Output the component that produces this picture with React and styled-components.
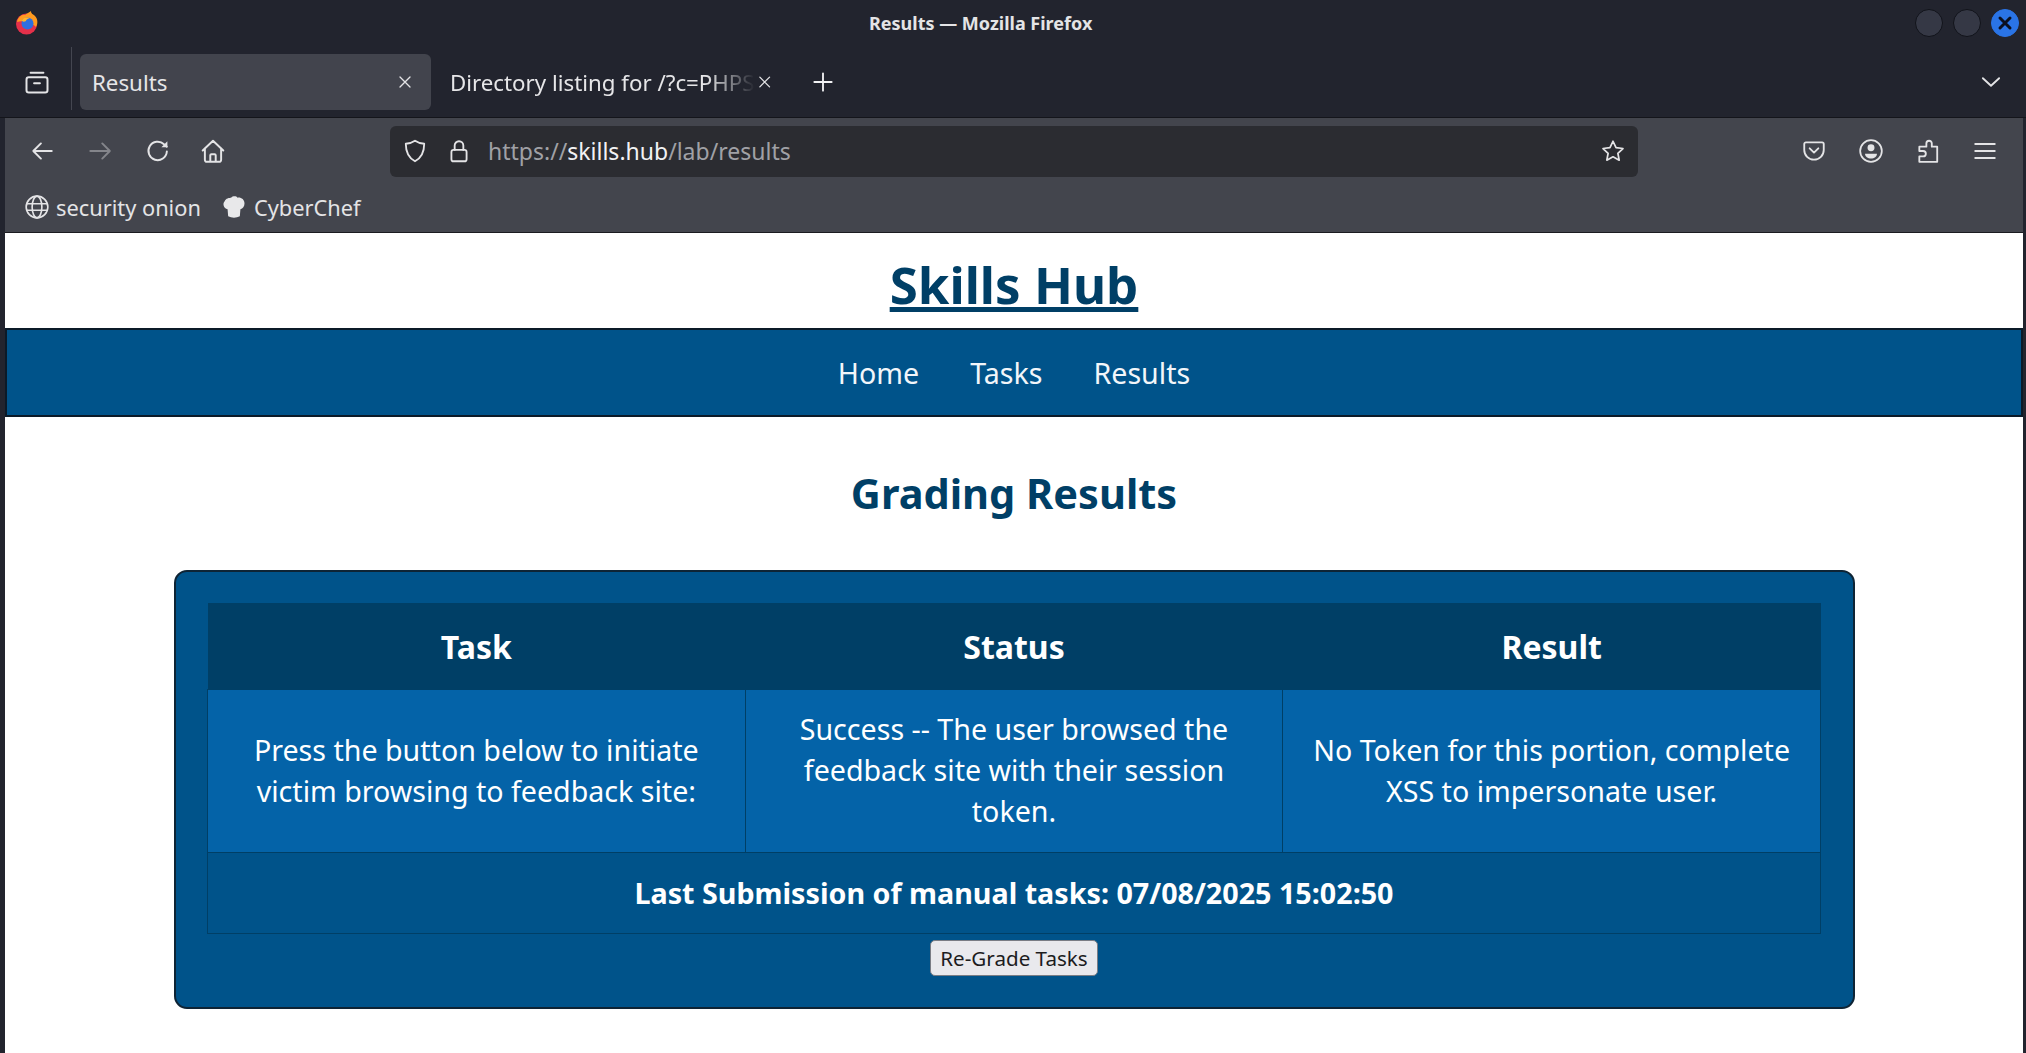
import styled, { createGlobalStyle } from 'styled-components';

const Global = createGlobalStyle`
  html, body {
    margin: 0;
    height: 100%;
    background: #22242e;
    overflow: hidden;
  }
  * { box-sizing: border-box; }
`;

const Chrome = styled.div`
  height: 1053px;
  display: flex;
  flex-direction: column;
  background: #22242e;
  font-family: 'Noto Sans', sans-serif;
  color: #e6e6e8;
`;

const TitleBar = styled.div`
  height: 46px;
  flex: none;
  display: grid;
  grid-template-columns: 854px auto 1fr;
  align-items: center;
  padding: 0 7px 0 15px;
`;

const WindowTitle = styled.div`
  font-size: 18px;
  font-weight: 700;
  color: #e4e4e6;
`;

const WindowButtons = styled.div`
  display: flex;
  gap: 10px;
  justify-content: flex-end;
`;

const WindowButton = styled.div`
  width: 28px;
  height: 28px;
  border-radius: 50%;
  display: flex;
  align-items: center;
  justify-content: center;
  border: 1px solid ${(p) => (p.$active ? '#2a74e6' : '#11131a')};
  background: ${(p) => (p.$active ? '#2a74e6' : '#353845')};
`;

const TabBar = styled.div`
  height: 72px;
  flex: none;
  display: flex;
  align-items: flex-start;
  padding: 8px 22px 0 5px;
  border-bottom: 1px solid #14151b;
`;

const TabsButton = styled.div`
  width: 67px;
  height: 63px;
  margin-top: -7px;
  padding: 6px 3px 0 0;
  border-right: 1px solid #444650;
  display: flex;
  align-items: center;
  justify-content: center;
`;

const Tab = styled.div`
  height: 56px;
  width: ${(p) => p.$width}px;
  margin-left: ${(p) => p.$offset}px;
  flex: none;
  display: flex;
  align-items: center;
  justify-content: space-between;
  padding: 0 ${(p) => p.$padRight}px 0 ${(p) => p.$padLeft}px;
  border-radius: 6px;
  background: ${(p) => (p.$active ? '#42444d' : 'transparent')};
  font-size: 22.3px;
`;

const TabLabel = styled.span`
  white-space: nowrap;
  mask-image: ${(p) =>
    p.$fade ? 'linear-gradient(to right, #000 84%, transparent 100%)' : 'none'};
`;

const NewTab = styled.div`
  margin-left: 31px;
  height: 56px;
  display: flex;
  align-items: center;
`;

const TabEnd = styled.div`
  margin-left: auto;
  height: 56px;
  display: flex;
  align-items: center;
`;

const Frame = styled.div`
  flex: 1;
  display: flex;
  flex-direction: column;
  margin: 0 3px 0 5px;
  min-height: 0;
`;

const NavBar = styled.div`
  height: 66px;
  flex: none;
  background: #43454d;
  display: flex;
  align-items: center;
  padding: 0 25px 0 24px;
`;

const NavIcons = styled.div`
  display: flex;
  align-items: center;
  gap: ${(p) => p.$gap}px;
`;

const UrlBar = styled.div`
  width: 1248px;
  height: 51px;
  margin: 0 auto 0 164px;
  border-radius: 6px;
  background: #2b2c31;
  display: flex;
  align-items: center;
  padding: 0 12px 0 12px;
`;

const LockSlot = styled.div`
  margin-left: 18px;
  display: flex;
`;

const UrlText = styled.div`
  margin-left: 16px;
  flex: 1;
  font-size: 23px;
  color: #a0a1a6;
  white-space: nowrap;

  b {
    font-weight: 400;
    color: #f2f2f4;
  }
`;

const Bookmarks = styled.div`
  height: 49px;
  flex: none;
  background: #43454d;
  display: flex;
  align-items: center;
  gap: 19px;
  padding: 0 0 2px 19px;
  border-bottom: 1px solid #1a1b20;
`;

const Bookmark = styled.div`
  display: flex;
  align-items: center;
  gap: 6px;
  font-size: 21.8px;
  color: #e4e4e6;
`;

const Page = styled.main`
  flex: 1;
  min-height: 0;
  background: #fff;
  overflow: hidden;
`;

const SiteTitle = styled.h1`
  height: 95px;
  margin: 0;
  padding-top: 6px;
  display: flex;
  align-items: center;
  justify-content: center;
  font-size: 51px;
  font-weight: 700;
  color: #003f66;
  text-decoration: underline;
`;

const SiteNav = styled.nav`
  height: 89px;
  background: #00538a;
  border: 2px solid #0b1a28;
  display: flex;
  align-items: center;
  justify-content: center;
  gap: 51px;
  font-size: 28.6px;
  color: #f2f6fa;
`;

const Heading = styled.h2`
  margin: 0;
  height: 153px;
  padding-bottom: 2px;
  display: flex;
  align-items: center;
  justify-content: center;
  font-size: 41.5px;
  font-weight: 700;
  color: #003f66;
`;

const Card = styled.section`
  width: 1681px;
  margin-left: 169px;
  padding: 31px 32px 30px 31px;
  background: #00538a;
  border: 2px solid #0e2435;
  border-radius: 13px;
  display: flex;
  flex-direction: column;
  align-items: center;
`;

const Table = styled.table`
  width: 100%;
  table-layout: fixed;
  border-collapse: collapse;
  color: #fff;
`;

const HeadCell = styled.th`
  height: 86px;
  padding: 2px 0 0;
  background: #003f66;
  font-size: 32px;
  font-weight: 700;
`;

const Cell = styled.td`
  height: 163px;
  padding: 0 20px 2px;
  background: #0463a8;
  border: 1px solid #003f66;
  font-size: 28.6px;
  line-height: 41px;
  text-align: center;
`;

const FooterCell = styled.td`
  height: 81px;
  border: 1px solid #003f66;
  font-size: 28.7px;
  font-weight: 700;
  text-align: center;
`;

const Regrade = styled.button`
  width: 168px;
  height: 36px;
  margin-top: 6px;
  margin-bottom: 1px;
  padding: 0;
  border: 1px solid #7a7d85;
  border-radius: 5px;
  background: #e9e9ed;
  font-family: 'Noto Sans', sans-serif;
  font-size: 20.6px;
  color: #1c1c1e;
`;

const Line = ({ size = 26, children, color = '#e4e4e6', width = 2 }) => (
  <svg
    width={size}
    height={size}
    viewBox="0 0 24 24"
    fill="none"
    stroke={color}
    strokeWidth={width}
    strokeLinecap="round"
    strokeLinejoin="round"
  >
    {children}
  </svg>
);

const FirefoxLogo = () => (
  <svg width="24" height="24" viewBox="0 0 24 24">
    <circle cx="11.5" cy="13" r="10.5" fill="#e5304a" />
    <path d="M2 11 C3 6 7 3 10 4 C12 2 15 1 16 0 C16 3 18 3 20 5 C23 8 23 13 21 16 C17 12 8 9 2 11Z" fill="#ff9a1f" />
    <circle cx="12.5" cy="12.5" r="6" fill="#2e6fe0" />
    <path d="M7 9 C9 6 13 6 15 7 C12 8 11 9 11 10 C9 11 7 11 7 9Z" fill="#ffb52e" />
  </svg>
);

const ChefHat = () => (
  <svg width="28" height="28" viewBox="0 0 24 24">
    <path
      d="M7 20 L6.500 14 C3 13 2 9 4 7 C5 4.500 8 4 9.500 4 C11 2.500 14 2.500 15 4 C18 3.500 21 5.500 21 9 C21 11.500 19.500 13.500 17.500 14 L17 20 C14 21.500 10 21.500 7 20Z"
      fill="#e8e8ea"
    />
  </svg>
);

function App() {
  return (
    <Chrome>
      <Global />
      <TitleBar>
        <FirefoxLogo />
        <WindowTitle>Results — Mozilla Firefox</WindowTitle>
        <WindowButtons>
          <WindowButton />
          <WindowButton />
          <WindowButton $active>
            <Line size={20} color="#0b1020" width={3.6}>
              <path d="M6 6l12 12M18 6L6 18" />
            </Line>
          </WindowButton>
        </WindowButtons>
      </TitleBar>

      <TabBar>
        <TabsButton>
          <Line size={28} width={1.7}>
            <path d="M6.500 4h11M5 8h14a2 2 0 0 1 2 2v9a2 2 0 0 1-2 2H5a2 2 0 0 1-2-2v-9a2 2 0 0 1 2-2zM9.500 13h5" />
          </Line>
        </TabsButton>
        <Tab $active $width={351} $offset={8} $padLeft={12} $padRight={16}>
          <TabLabel>Results</TabLabel>
          <Line size={20} width={1.6}>
            <path d="M6 6l12 12M18 6L6 18" />
          </Line>
        </Tab>
        <Tab $width={340} $offset={8} $padLeft={11} $padRight={5}>
          <TabLabel $fade>Directory listing for /?c=PHPS</TabLabel>
          <Line size={20} width={1.6}>
            <path d="M6 6l12 12M18 6L6 18" />
          </Line>
        </Tab>
        <NewTab>
          <Line size={26} color="#f2f2f4" width={1.7}>
            <path d="M12 4v16M4 12h16" />
          </Line>
        </NewTab>
        <TabEnd>
          <Line size={26} width={1.7}>
            <path d="M4.500 8.500L12 15.500l7.500-7" />
          </Line>
        </TabEnd>
      </TabBar>

      <Frame>
        <NavBar>
          <NavIcons $gap={31}>
            <Line width={1.8}>
              <path d="M21 12H4M11 5l-7 7 7 7" />
            </Line>
            <Line color="#84858b" width={1.8}>
              <path d="M4 12h18M15 5l7 7-7 7" />
            </Line>
            <Line width={1.8}>
              <path d="M22 12.500a8.500 8.500 0 1 1-2.600-6.700L22 8" />
              <path d="M22.500 3v5.500h-5.500z" fill="#e4e4e6" stroke="none" />
            </Line>
            <Line width={1.8}>
              <path d="M2.500 11.500L12 2.500l9.500 9M4.500 9.500V20a2 2 0 0 0 2 2h11a2 2 0 0 0 2-2V9.500M9.500 22v-6a1 1 0 0 1 1-1h3a1 1 0 0 1 1 1v6" />
            </Line>
          </NavIcons>
          <UrlBar>
            <Line width={1.7}>
              <path d="M12 2.500c2.500 1.700 5.500 2.600 8.500 2.800 0 7.500-2.500 13-8.500 16.200C6 18.300 3.500 12.800 3.500 5.300c3-.2 6-1.100 8.500-2.800z" />
            </Line>
            <LockSlot>
              <Line width={1.7}>
                <rect x="5" y="11" width="14" height="10.500" rx="2" />
                <path d="M8 11V7a4 4 0 0 1 8 0v4" />
              </Line>
            </LockSlot>
            <UrlText>
              https://<b>skills.hub</b>/lab/results
            </UrlText>
            <Line width={1.6}>
              <path d="M12 3l2.800 5.900 6.400.8-4.700 4.400 1.200 6.400L12 17.400l-5.700 3.100 1.200-6.400L2.800 9.700l6.400-.8z" />
            </Line>
          </UrlBar>
          <NavIcons $gap={31}>
            <Line width={1.7}>
              <path d="M4.500 4h15A1.500 1.500 0 0 1 21 5.500V11a9 9 0 0 1-18 0V5.500A1.500 1.500 0 0 1 4.500 4z" />
              <path d="M8 9.500l4 4 4-4" />
            </Line>
            <Line width={1.6}>
              <circle cx="12" cy="12" r="10" />
              <circle cx="12" cy="9" r="3.200" fill="#e4e4e6" stroke="none" />
              <path d="M6.500 14.500h11c0 2.500-2.500 4.500-5.500 4.500s-5.500-2-5.500-4.500z" fill="#e4e4e6" stroke="none" />
            </Line>
            <Line width={1.7}>
              <path d="M4 22v-5h3.500a2 2 0 0 0 0-5H4V8h6.500V5a2.500 2.500 0 0 1 5 0v3H20.500v14z" />
            </Line>
            <Line width={1.8}>
              <path d="M3 5.500h18M3 12h18M3 18.500h18" />
            </Line>
          </NavIcons>
        </NavBar>
        <Bookmarks>
          <Bookmark>
            <Line size={26} width={1.5}>
              <circle cx="12" cy="12" r="10" />
              <ellipse cx="12" cy="12" rx="4.500" ry="10" />
              <path d="M2.500 9h19M2.500 15h19" />
            </Line>
            security onion
          </Bookmark>
          <Bookmark>
            <ChefHat />
            CyberChef
          </Bookmark>
        </Bookmarks>

        <Page>
          <SiteTitle>Skills Hub</SiteTitle>
          <SiteNav>
            <span>Home</span>
            <span>Tasks</span>
            <span>Results</span>
          </SiteNav>
          <Heading>Grading Results</Heading>
          <Card>
            <Table>
              <thead>
                <tr>
                  <HeadCell>Task</HeadCell>
                  <HeadCell>Status</HeadCell>
                  <HeadCell>Result</HeadCell>
                </tr>
              </thead>
              <tbody>
                <tr>
                  <Cell>Press the button below to initiate victim browsing to feedback site:</Cell>
                  <Cell>Success -- The user browsed the feedback site with their session token.</Cell>
                  <Cell>No Token for this portion, complete XSS to impersonate user.</Cell>
                </tr>
                <tr>
                  <FooterCell colSpan={3}>Last Submission of manual tasks: 07/08/2025 15:02:50</FooterCell>
                </tr>
              </tbody>
            </Table>
            <Regrade>Re-Grade Tasks</Regrade>
          </Card>
        </Page>
      </Frame>
    </Chrome>
  );
}

export default App;
